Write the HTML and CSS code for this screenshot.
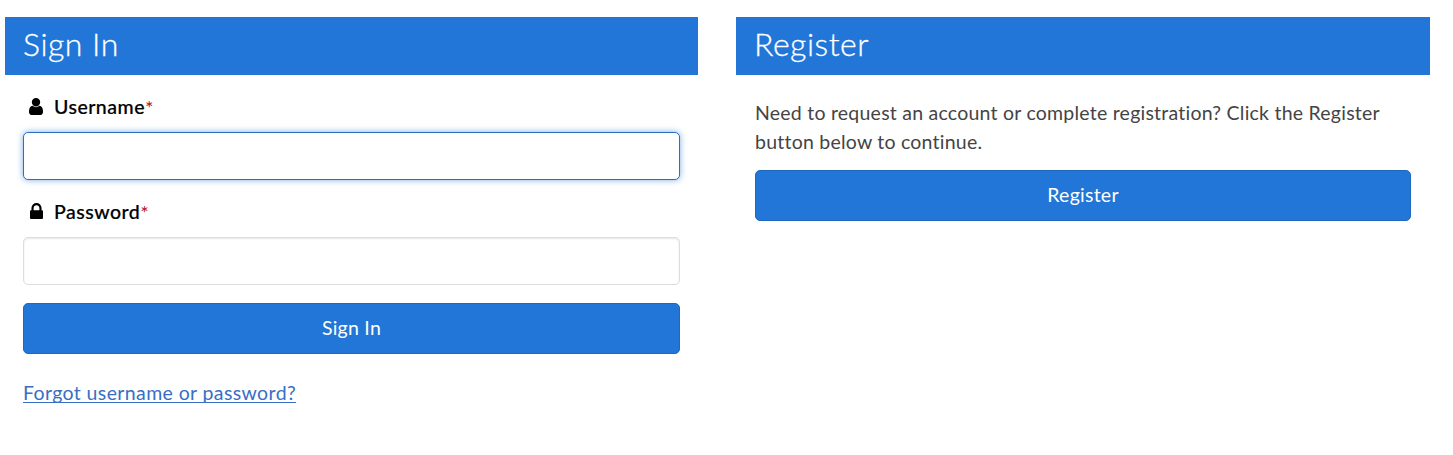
FILE: index.html
```
<!DOCTYPE html>
<html lang="en">
<head>
	<meta charset="UTF-8">
	<title>Sign In</title>
	<link rel="stylesheet" href="styles.css">
</head>
<body>
	<div class="ct">
		<form class="panel sign-in">
			<h2 class="title"><span>Sign In</span></h2>
			<div class="panel-body">
				<label class="label" for="username">
					<svg class="icon icon-user" viewBox="0 0 1280 1536"><path d="M1280 1271q0 109-62.500 187t-150.500 78h-854q-88 0-150.500-78t-62.500-187q0-85 8.500-160.500t31.500-152 58.500-131 94-89 134.500-34.500q131 128 313 128t313-128q76 0 134.500 34.500t94 89 58.500 131 31.500 152 8.500 160.500zM1024 384q0 159-112.500 271.500t-271.500 112.500-271.500-112.500-112.500-271.500 112.500-271.500 271.500-112.500 271.500 112.500 112.500 271.500z"/></svg>
					<span class="name">Username</span><span class="required">*</span>
				</label>
				<input class="input focus" id="username" type="text">
				<label class="label" for="password">
					<svg class="icon icon-lock" viewBox="0 128 1152 1408"><path d="M320 768h512v-192q0-106-75-181t-181-75-181 75-75 181v192zM1152 864v576q0 40-28 68t-68 28h-960q-40 0-68-28t-28-68v-576q0-40 28-68t68-28h32v-192q0-184 132-316t316-132 316 132 132 316v192h32q40 0 68 28t28 68z"/></svg>
					<span class="name">Password</span><span class="required">*</span>
				</label>
				<input class="input" id="password" type="password">
				<button class="btn" type="button"><span>Sign In</span></button>
				<a class="forgot" href="#">Forgot username or password?</a>
			</div>
		</form>
		<div class="panel register">
			<h2 class="title"><span>Register</span></h2>
			<div class="panel-body">
				<p class="text">Need to request an account or complete registration? Click the Register<br>button below to continue.</p>
				<button class="btn" type="button"><span>Register</span></button>
			</div>
		</div>
	</div>
</body>
</html>
```
FILE: styles.css
```
* {
	box-sizing: border-box;
}
body {
	margin: 0;
	background-color: #fff;
	font-family: Lato, "Open Sans", sans-serif;
	font-size: 19.5px;
	color: #444;
}
h2,p {
	margin: 0;
}
.ct {
	display: flex;
	gap: 38px;
	padding: 17px 23px 0 5px;
}
.panel {
	width: 693px;
}
.register {
	width: 694px;
}
.title {
	height: 58px;
	padding-left: 18px;
	background-color: #2176d7;
	color: #fff;
	font-size: 32px;
	font-weight: 300;
	letter-spacing: .5px;
	line-height: 54px;
	-webkit-text-stroke: 0.3px #fff;
}
.panel-body {
	padding: 0 18px;
}
.register .panel-body {
	padding: 0 19px;
}
.label {
	display: flex;
	align-items: center;
	height: 57px;
	padding: 7px 0 0 6px;
	color: #000;
	line-height: 28px;
}
.icon {
	flex: none;
	fill: #000;
}
.icon-user {
	width: 14px;
	height: 17px;
	margin: 0 11px 2px 0;
}
.icon-lock {
	width: 13px;
	height: 16px;
	margin: 0 11px 2px 1px;
}
.name {
	font-weight: 500;
	letter-spacing: .5px;
	-webkit-text-stroke: 0.2px #000;
}
.required {
	color: #b3122a;
	font-size: 20px;
}
.input {
	display: block;
	width: 100%;
	height: 48px;
	padding: 0 12px;
	border: 1px solid #ddd;
	border-radius: 5px;
	background-color: #fff;
	box-shadow: inset 0 1px 2px rgba(0,0,0,.1);
	font: inherit;
	outline: none;
}
.focus {
	border-color: #2c70bd;
	box-shadow: 0 0 6px rgba(33,118,215,.6);
}
.btn {
	display: block;
	width: 100%;
	height: 51px;
	padding: 0 0 2px;
	border: 1px solid #1e69be;
	border-radius: 5px;
	background-color: #2176d7;
	color: #fff;
	font: inherit;
	letter-spacing: .25px;
	line-height: 47px;
}
.sign-in .btn {
	margin-top: 18px;
}
.forgot {
	display: inline-block;
	margin-top: 24px;
	color: #386fc4;
	letter-spacing: .38px;
	line-height: 29px;
	text-decoration-thickness: 1px;
	text-underline-offset: 2px;
	text-decoration-skip-ink: none;
}
.text {
	padding: 23px 0 14px;
	letter-spacing: .23px;
	line-height: 29px;
	white-space: nowrap;
}
```
